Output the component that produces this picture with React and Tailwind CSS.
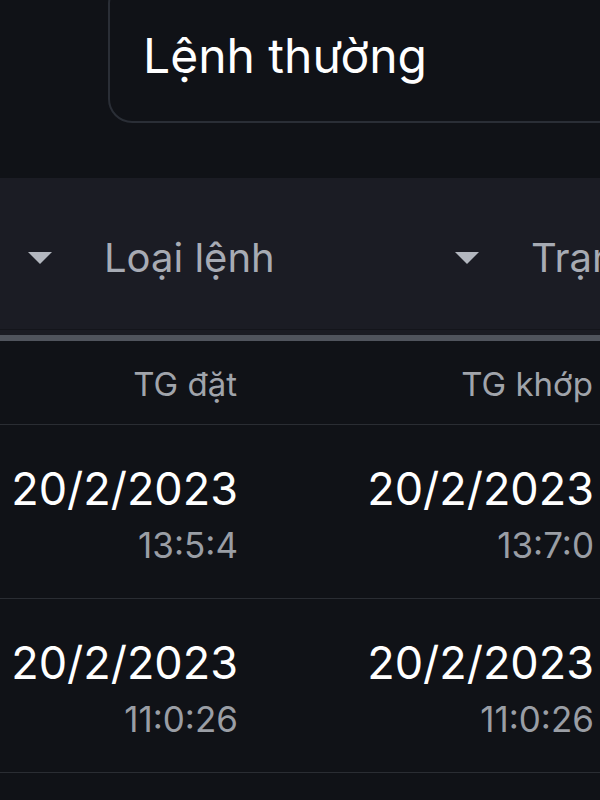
import React from 'react';

const ROWS = [
  { placedDate: '20/2/2023', placedTime: '13:5:4', matchedDate: '20/2/2023', matchedTime: '13:7:0' },
  { placedDate: '20/2/2023', placedTime: '11:0:26', matchedDate: '20/2/2023', matchedTime: '11:0:26' },
];

const Caret = () => (
  <svg width="24" height="12" viewBox="0 0 24 12" className="shrink-0">
    <path d="M0 0 H24 L12 12 Z" fill="#b3b7bf" />
  </svg>
);

const FilterItem = ({ label }) => (
  <div className="flex items-center w-[427px] shrink-0 pl-[28px]">
    <Caret />
    <span className="ml-[52px] text-[40px] text-[#a7abb4] whitespace-nowrap leading-none">{label}</span>
  </div>
);

const Cell = ({ date, time, width }) => (
  <div className={`${width} shrink-0 flex flex-col items-end`}>
    <span className="text-[45px] text-white leading-[56px]">{date}</span>
    <span className="text-[35px] text-[#9a9ea5] leading-[56px]">{time}</span>
  </div>
);

export default function App() {
  return (
    <div
      className="w-[600px] h-[800px] overflow-hidden bg-[#101217]"
      style={{ fontFamily: 'Inter, "Noto Sans", sans-serif' }}
    >
      {/* Order type select */}
      <div className="-mt-[20px] ml-[108px] w-[600px] h-[143px] rounded-[24px] border-2 border-[#2a2e36] flex items-center pl-[33px] pt-[8px]">
        <span className="text-[48px] text-white leading-none whitespace-nowrap">Lệnh thường</span>
      </div>

      {/* Filter bar */}
      <div className="mt-[55px] bg-[#1b1c24]">
        <div className="h-[151px] flex items-center overflow-hidden pt-[8px]">
          <FilterItem label="Loại lệnh" />
          <FilterItem label="Trạng thái" />
        </div>
        <div className="h-px bg-[#14151b]" />
        <div className="h-[5px]" />
        <div className="h-[6px] bg-[#50545d]" />
      </div>

      {/* Table header */}
      <div className="h-[84px] flex items-center pt-[5px] border-b border-[#2a2d33] text-[33px] text-[#a0a4ab] whitespace-nowrap">
        <div className="w-[237px] text-right shrink-0">TG đặt</div>
        <div className="w-[356px] text-right shrink-0">TG khớp</div>
      </div>

      {/* Rows */}
      {ROWS.map((row, i) => (
        <div key={i} className="h-[174px] flex items-center pt-[10px] border-b border-[#2a2d33] whitespace-nowrap">
          <Cell width="w-[238px]" date={row.placedDate} time={row.placedTime} />
          <Cell width="w-[356px]" date={row.matchedDate} time={row.matchedTime} />
        </div>
      ))}
    </div>
  );
}
